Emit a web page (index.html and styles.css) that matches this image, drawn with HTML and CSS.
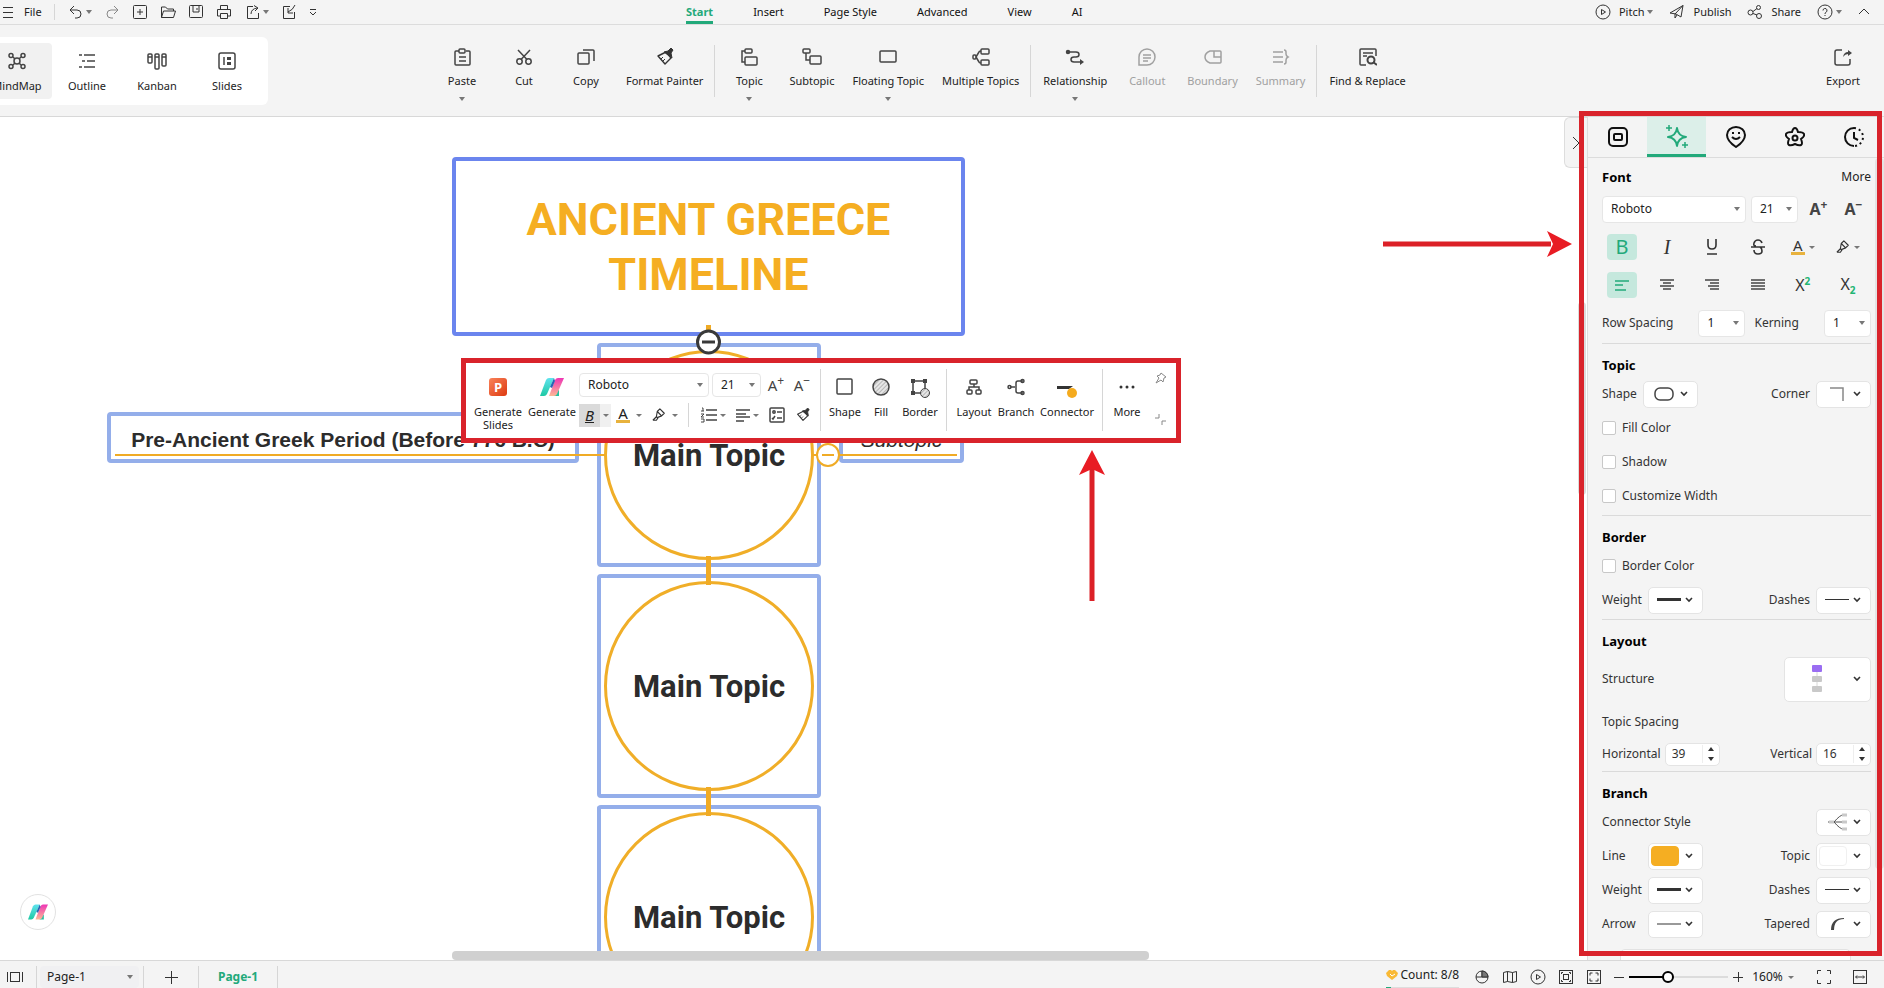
FILE: index.html
```html
<!DOCTYPE html>
<html lang="en">
<head>
    <meta charset="UTF-8">
    <meta name="viewport" content="width=device-width, initial-scale=1.0">
    <title>Ancient Greece Timeline</title>
    <link rel="stylesheet" href="styles.css">
</head>
<body>
    <!-- shared icons -->
    <svg class="defs" width="0" height="0" aria-hidden="true">
        <defs>
            <linearGradient id="teal" x1="0" y1="0" x2="0" y2="1"><stop offset="0" stop-color="#5fe3ee"/><stop offset="1" stop-color="#1fc9a4"/></linearGradient>
            <linearGradient id="pink" x1="0" y1="0" x2="0" y2="1"><stop offset="0" stop-color="#ee35b4"/><stop offset="1" stop-color="#fdb896"/></linearGradient>
            <linearGradient id="orange" x1="0" y1="0" x2="1" y2="1"><stop offset="0" stop-color="#f9825a"/><stop offset="1" stop-color="#dd3a10"/></linearGradient>
            <pattern id="hatch" width="3" height="3" patternUnits="userSpaceOnUse" patternTransform="rotate(45)"><rect width="3" height="3" fill="#e6e6e6"/><path d="M0 0V3" stroke="#aaa" stroke-width="1.6"/></pattern>
        </defs>
        <symbol id="logo" viewBox="0 0 24 18">
            <path d="M14 14l5-2 0 6h-5z" fill="#25bf9f"/>
            <path d="M6 2q1-2 3-2h5L7 16q-1 2-3 2H0z" fill="url(#teal)"/>
            <path d="M15 2q1-2 3-2h6L17 16q-1 2-3 2H9z" fill="url(#pink)"/>
            <path d="M14 0l1 3-3 7-2-1z" fill="#2764b4"/>
        </symbol>
        <symbol id="painter" viewBox="0 0 18 18">
            <path d="M2 8l8-4 5 6-6 6z" fill="none" stroke="currentColor" stroke-width="1.4" stroke-linejoin="round"/>
            <path d="M8 4l4-1 3-3 2 2-2 3 1 5z" fill="currentColor" stroke="currentColor" stroke-linejoin="round"/>
            <path d="M5 11l2-2M7 13l2-2" stroke="currentColor"/>
        </symbol>
        <symbol id="pen" viewBox="0 0 16 16">
            <path d="M1 14l4-4M5 10l1-6 3-3 5 5-3 3-5 2zM6 4l5 5M1 14h4l2-3" fill="none" stroke="currentColor" stroke-width="1.300" stroke-linejoin="round"/>
        </symbol>
        <symbol id="chevron" viewBox="0 0 8 6">
            <path d="M1 1l3 3 3-3" fill="none" stroke="#333" stroke-width="1.6"/>
        </symbol>
    </svg>

    <header class="topbar">
        <button class="file"><svg class="ico" width="10" height="12"><path d="M0 1.5h10M0 6.5h10M0 11.5h10"/></svg>File</button>
        <span class="line"></span>
        <div class="quick">
            <button class="split" aria-label="Undo"><svg class="ico" width="16" height="16"><path d="M6 2L2 6l4 4M2 6h7a4 4 0 0 1 0 8H7"/></svg><i class="caret"></i></button>
            <button aria-label="Redo"><svg class="ico light" width="16" height="16"><path d="M10 2l4 4-4 4M14 6H7a4 4 0 0 0 0 8h2"/></svg></button>
            <button aria-label="New"><svg class="ico" width="16" height="16"><rect x="1.5" y="1.5" width="13" height="13" rx="1"/><path d="M8 5v6M5 8h6"/></svg></button>
            <button aria-label="Open"><svg class="ico" width="16" height="16"><path d="M1.500 13.500V3h4l2 2h6v2M1.500 13.500l2-6.500h12l-2 6.500z"/></svg></button>
            <button aria-label="Save"><svg class="ico" width="16" height="16"><rect x="1.500" y="1.500" width="13" height="12" rx="1"/><path d="M5 2v6h6V2M9 4v2"/></svg></button>
            <button aria-label="Print"><svg class="ico" width="16" height="16"><path d="M4.500 5V1.500h7V5M4 12H1.500V5.500h13V12H12M4.500 9.500h7v5h-7z"/></svg></button>
            <button class="split" aria-label="Share file"><svg class="ico" width="16" height="16"><path d="M8 2.500H2.500v12h11V9M6 10q0-5 6-6M9 1.500l4 2.500-3 3"/></svg><i class="caret"></i></button>
            <button aria-label="Import"><svg class="ico" width="16" height="16"><path d="M9 2.500H2.500v12h11V8M14 1q-2 5-7 7M7 4v5h5"/></svg></button>
            <button class="narrow" aria-label="Customize"><svg class="ico" width="8" height="8"><path d="M1 1.500h6M1 4l3 3 3-3"/></svg></button>
        </div>
        <nav class="menu">
            <a href="#" class="active">Start</a>
            <a href="#">Insert</a>
            <a href="#">Page Style</a>
            <a href="#">Advanced</a>
            <a href="#">View</a>
            <a href="#">AI</a>
        </nav>
        <div class="account">
            <button><svg class="ico" width="16" height="16"><circle cx="8" cy="8" r="7"/><path d="M6.500 5.500v5l4-2.500z"/></svg>Pitch<i class="caret"></i></button>
            <button><svg class="ico" width="16" height="16"><path d="M1 9L14 1.500 12 13 7 10zM14 1.500L6 10v4l2-3"/></svg>Publish</button>
            <button><svg class="ico" width="16" height="16"><circle cx="3.500" cy="8.500" r="2.500"/><circle cx="11.500" cy="3.500" r="2"/><circle cx="12" cy="12" r="2.500"/><path d="M6 7.500l4-3M6 9.500l4 1.500"/></svg>Share</button>
            <button aria-label="Help"><svg class="ico" width="16" height="16"><circle cx="8" cy="8" r="7"/><path d="M6 6.500a2 2 0 1 1 3 1.700q-1 .6-1 1.800M8 11v1"/></svg><i class="caret"></i></button>
            <button aria-label="Collapse ribbon"><svg class="ico" width="12" height="8"><path d="M1 6l5-5 5 5"/></svg></button>
        </div>
    </header>

    <div class="ribbon">
        <div class="views">
            <button class="active"><svg class="ico bold" width="18" height="18"><circle cx="9" cy="9" r="3"/><circle cx="3" cy="3.500" r="2"/><circle cx="15" cy="3.500" r="2"/><circle cx="3" cy="14.500" r="2"/><circle cx="15" cy="14.500" r="2"/><path d="M5 5l2 2M13 5l-2 2M5 13l2-2M13 13l-2-2"/></svg>MindMap</button>
            <button><svg class="ico bold" width="18" height="18"><path d="M1 3h3M6 3h11M4 9h3M9 9h8M1 15h3M6 15h11"/></svg>Outline</button>
            <button><svg class="ico bold" width="20" height="18"><rect x="1" y="2" width="4" height="9" rx="1"/><rect x="8" y="2" width="4" height="15" rx="1"/><rect x="15" y="2" width="4" height="12" rx="1"/><path d="M1 5h4M8 5h4M15 5h4"/></svg>Kanban</button>
            <button><svg class="ico bold" width="18" height="18"><rect x="1" y="1" width="16" height="16" rx="2"/><path d="M6 5v8"/><path d="M9 5h4v3H9zM9 10h4v3H9z" fill="currentColor" stroke="none"/></svg>Slides</button>
        </div>
        <div class="tools">
            <button><svg class="ico bold" width="18" height="18"><path d="M6 3H3q-1 0-1 1v12q0 1 1 1h13q1 0 1-1V4q0-1-1-1h-3"/><rect x="6" y="1" width="6" height="4" rx="1"/><path d="M6 9h7M6 13h7"/></svg>Paste<i class="caret"></i></button>
            <button><svg class="ico bold" width="18" height="18"><circle cx="4.500" cy="13.500" r="2.700"/><circle cx="13.500" cy="13.500" r="2.700"/><path d="M3 2l9 9.500M15 2l-9 9.500"/></svg>Cut</button>
            <button><svg class="ico bold" width="18" height="18"><rect x="1" y="5" width="11" height="11" rx="1"/><path d="M6 2h10q1 0 1 1v10"/></svg>Copy</button>
            <button><svg class="ico" width="18" height="18"><use href="#painter"/></svg>Format Painter</button>
            <span class="line"></span>
            <button><svg class="ico bold" width="18" height="18"><rect x="5" y="1" width="7" height="4" rx="1"/><rect x="5" y="9" width="12" height="8" rx="1"/><path d="M5 3H2v11h3"/></svg>Topic<i class="caret"></i></button>
            <button><svg class="ico bold" width="20" height="18"><rect x="1" y="1" width="7" height="4" rx="1"/><rect x="8" y="8" width="11" height="8" rx="1"/><path d="M4 5v7h4"/></svg>Subtopic</button>
            <button><svg class="ico bold" width="18" height="18"><rect x="1" y="3" width="16" height="11" rx="1"/></svg>Floating Topic<i class="caret"></i></button>
            <button><svg class="ico bold" width="18" height="18"><rect x="9" y="1" width="8" height="5" rx="1"/><rect x="9" y="12" width="8" height="5" rx="1"/><rect x="1" y="7" width="3" height="4" rx="1"/><path d="M4 9l3-5q0-1 2-1M4 9l3 5q0 1 2 1"/></svg>Multiple Topics</button>
            <span class="line"></span>
            <button><svg class="ico bold" width="20" height="18"><path d="M3 4h8q3 0 3 2.500T11 9H9q-3 0-3 2.500T9 14h8"/><circle cx="3" cy="4" r="1.500" fill="currentColor"/><path d="M15 11l4 3-4 3z" fill="currentColor" stroke="none"/></svg>Relationship<i class="caret"></i></button>
            <button disabled><svg class="ico bold" width="18" height="18"><path d="M1 17V9a8 8 0 1 1 8 8zM5 7h8M5 10h8M5 13h5"/></svg>Callout</button>
            <button disabled><svg class="ico bold" width="18" height="18"><path d="M6 3h10q1 0 1 1v10q0 1-1 1H6q-5-2-5-6t5-6zM10 3v6h7"/></svg>Boundary</button>
            <button disabled><svg class="ico bold" width="18" height="18"><path d="M1 4h10M1 9h10M1 14h10M12 2q2 0 2 2v2q0 2 2 3-2 1-2 3v2q0 2-2 2"/></svg>Summary</button>
            <span class="line"></span>
            <button><svg class="ico bold" width="18" height="18"><path d="M7 17H2q-1 0-1-1V2q0-1 1-1h14q1 0 1 1v6M4 5h10M4 8h4"/><circle cx="12" cy="12" r="3.500" stroke-width="2"/><path d="M14 14l4 3" stroke-width="2"/></svg>Find &amp; Replace</button>
        </div>
        <div class="tools export">
            <button><svg class="ico bold" width="18" height="18"><path d="M8 2H3Q1 2 1 4v11q0 2 2 2h11q2 0 2-2v-4"/><path d="M9 9q1-5 5-5V2l4 3-4 3V6q-3 0-5 3z" fill="currentColor" stroke="none"/></svg>Export</button>
        </div>
    </div>

    <main class="workspace">
        <section class="canvas">
            <div class="node root"><h1>ANCIENT GREECE TIMELINE</h1></div>

            <div class="node main n1"><div class="circle">Main Topic</div></div>
            <div class="node main n2"><div class="circle">Main Topic</div></div>
            <div class="node main n3"><div class="circle">Main Topic</div></div>

            <div class="node leaf left">Pre-Ancient Greek Period (Before 776 B.C)</div>
            <div class="node leaf right">Subtopic</div>

            <svg class="links" width="1100" height="843">
                <path d="M115 338H605M812 338h145" stroke="#f0ab25" stroke-width="2"/>
                <path d="M708.500 208v15M708.500 439v29M708.500 670v29" stroke="#f0ab25" stroke-width="5"/>
                <circle cx="708.500" cy="225" r="11" fill="#fff" stroke="#3a3a3a" stroke-width="3"/>
                <path d="M702 225h13" stroke="#3a3a3a" stroke-width="3"/>
                <circle cx="828" cy="338" r="11" fill="#fff" stroke="#f0ab25" stroke-width="2"/>
                <path d="M822 338h12" stroke="#f0ab25" stroke-width="2"/>
            </svg>

            <div class="floatbar">
                <button class="tool wide"><svg width="18" height="18"><rect width="18" height="18" rx="3" fill="url(#orange)"/><text x="9" y="14" text-anchor="middle" class="ppt">P</text></svg>Generate Slides</button>
                <button class="tool gen"><svg width="24" height="18"><use href="#logo"/></svg>Generate</button>
                <div class="format">
                    <div class="format-row">
                        <label class="select font"><select aria-label="Font"><option>Roboto</option></select></label>
                        <label class="select size"><select aria-label="Font size"><option>21</option></select></label>
                        <button class="grow">A<sup>+</sup></button>
                        <button class="grow">A<sup>−</sup></button>
                    </div>
                    <div class="format-row">
                        <button class="bold-btn"><span class="b">B</span><span class="drop"><i class="caret small"></i></span></button>
                        <button class="mini"><span class="letter">A</span><i class="caret small"></i></button>
                        <button class="mini" aria-label="Highlight"><svg class="ico" width="14" height="14"><use href="#pen"/></svg><i class="caret small"></i></button>
                        <span class="line"></span>
                        <button class="mini tight" aria-label="Numbering"><svg class="ico bold" width="16" height="16"><path d="M5 3h11M5 8h11M5 13h11"/><path d="M1 1h1v3M0 4h3M0 7h3l-3 3h3M0 12h3v3H0" stroke-width="1"/></svg><i class="caret small"></i></button>
                        <button class="mini tight" aria-label="Align"><svg class="ico bold" width="14" height="14"><path d="M0 2h14M0 6h10M0 9h14M0 13h8"/></svg><i class="caret small"></i></button>
                        <button class="grow" aria-label="Task list"><svg class="ico bold" width="16" height="16"><rect x="1" y="1" width="14" height="14" rx="1"/><circle cx="5" cy="5" r="1.200"/><path d="M8 5h5M8 11h5M3 11l1 1 2-3"/></svg></button>
                        <button class="grow" aria-label="Format painter"><svg class="ico" width="14" height="14"><use href="#painter"/></svg></button>
                    </div>
                </div>
                <span class="line"></span>
                <button class="tool w36"><svg class="ico bold" width="18" height="18"><rect x="1" y="1" width="15" height="15" rx="1"/></svg>Shape</button>
                <button class="tool w36"><svg class="ico bold" width="18" height="18"><circle cx="9" cy="9" r="8" fill="url(#hatch)"/></svg>Fill</button>
                <button class="tool w42"><svg class="ico bold" width="20" height="20"><rect x="3" y="3" width="12" height="12"/><path d="M1 1h4v4H1zM13 1h4v4h-4zM1 13h4v4H1z" fill="currentColor" stroke="none"/><circle cx="15" cy="15" r="4.500" fill="url(#hatch)" stroke-width="1"/></svg>Border</button>
                <span class="line"></span>
                <button class="tool w42"><svg class="ico bold" width="18" height="18"><rect x="5" y="2" width="7" height="4" rx="1"/><rect x="2" y="12" width="5" height="4" rx="1"/><rect x="11" y="12" width="5" height="4" rx="1"/><path d="M9 6v3M4 12V9h10v3"/></svg>Layout</button>
                <button class="tool w42"><svg class="ico bold" width="18" height="18"><path d="M3 9h5M16 3h-5q-2 0-2 2v8q0 2 2 2h5"/><circle cx="2.500" cy="9" r="1.500"/><circle cx="15.500" cy="3" r="1.500"/><circle cx="15.500" cy="15" r="1.500"/></svg>Branch</button>
                <button class="tool w60"><svg width="20" height="20"><path d="M0 8h16l-4 3H0z" fill="#333"/><circle cx="15" cy="15" r="5" fill="#f5ab1e"/></svg>Connector</button>
                <span class="line"></span>
                <button class="tool w36"><svg width="18" height="18" fill="#333"><circle cx="3" cy="9" r="1.500"/><circle cx="9" cy="9" r="1.500"/><circle cx="15" cy="9" r="1.500"/></svg>More</button>
                <div class="pins">
                    <button aria-label="Pin"><svg class="ico" width="12" height="12"><path d="M6 1l5 4-2 1-1 4-2-2-5 3 3-5-2-2 3-1z"/></svg></button>
                    <button aria-label="Minimize"><svg class="ico" width="12" height="12"><path d="M0 4h4V0M7 11V7h4"/></svg></button>
                </div>
            </div>

            <svg class="arrow-right" width="192" height="28"><path d="M2 14h168" stroke="#dc2027" stroke-width="5"/><path d="M166 1l25 13-25 13 6-13z" fill="#e81c24"/></svg>
            <svg class="arrow-up" width="28" height="153"><path d="M14 152V20" stroke="#dc2027" stroke-width="5"/><path d="M1 26L14 1l13 25-13-6z" fill="#e81c24"/></svg>

            <button class="assistant" aria-label="AI assistant"><svg width="20" height="16"><use href="#logo"/></svg></button>
            <div class="hscroll"></div>
            <div class="vscroll"></div>
            <button class="collapse" aria-label="Hide panel"><svg class="ico" width="8" height="14"><path d="M1 1l6 6-6 6"/></svg></button>
        </section>

        <aside class="panel">
            <div class="tabs">
                <button aria-label="Topic"><svg class="ico heavy" width="20" height="20"><rect x="1" y="1" width="18" height="18" rx="4"/><rect x="6" y="7" width="8" height="6" rx="1"/></svg></button>
                <button class="active" aria-label="Style"><svg class="ico heavy" width="24" height="24"><path d="M12 3q1 8 9 9-8 1-9 9-1-8-9-9 8-1 9-9z" stroke-linejoin="round"/><path d="M4 0v6M1 3h6M20 17v6M17 20h6" stroke-width="1.500"/></svg></button>
                <button aria-label="Sticker"><svg class="ico heavy" width="20" height="22"><path d="M10 21q-9-6-9-12a9 8 0 0 1 18 0q0 6-9 12zM6 11q4 4 8 0M7 6v2M13 6v2"/></svg></button>
                <button aria-label="Theme"><svg class="ico heavy" width="20" height="20"><path d="M10 1q2 0 3 4 5 0 6 2t-3 5q2 5 0 6t-6-1q-4 2-6 1t0-6q-4-3-3-5t6-2q1-4 3-4z"/><circle cx="10" cy="11" r="2.500"/></svg></button>
                <button aria-label="History"><svg class="ico heavy" width="20" height="20"><path d="M10 1a9 9 0 0 0 0 18M10 5v6l4 2"/><path d="M10 1a9 9 0 0 1 0 18" stroke-dasharray="2 3"/></svg></button>
            </div>
            <div class="panel-body">
                <section class="group fonts">
                    <div class="title"><h2>Font</h2><a href="#">More</a></div>
                    <div class="row tall picks">
                        <label class="select font"><select aria-label="Font family"><option>Roboto</option></select></label>
                        <label class="select size"><select aria-label="Size"><option>21</option></select></label>
                        <button class="step">A<sup>+</sup></button>
                        <button class="step">A<sup>−</sup></button>
                    </div>
                    <div class="row tall marks">
                        <button class="active big">B</button>
                        <button class="italic">I</button>
                        <button aria-label="Underline"><svg class="ico heavy" width="14" height="16"><path d="M3 0v6q0 4 4 4t4-4V0M2 15h10" stroke-width="1.600"/></svg></button>
                        <button aria-label="Strikethrough"><svg class="ico heavy" width="14" height="16"><path d="M11 4q-1-3-4-3T3 4t2 3M0 8h14M3 11q0 4 4 4t4-3-2-4" stroke-width="1.600"/></svg></button>
                        <button><span class="letter">A</span><i class="caret small"></i></button>
                        <button aria-label="Highlight"><svg class="ico" width="14" height="14"><use href="#pen"/></svg><i class="caret small"></i></button>
                    </div>
                    <div class="row tall marks">
                        <button class="active" aria-label="Align left"><svg class="ico bold" width="14" height="12"><path d="M0 2h14M0 6h8M0 11h11"/></svg></button>
                        <button aria-label="Align center"><svg class="ico bold" width="14" height="12"><path d="M0 1h14M3 4h8M0 7h14M3 10h8"/></svg></button>
                        <button aria-label="Align right"><svg class="ico bold" width="14" height="12"><path d="M0 1h14M5 4h9M3 7h11M5 10h9"/></svg></button>
                        <button aria-label="Justify"><svg class="ico bold" width="14" height="12"><path d="M0 1h14M0 4h14M0 7h14M0 10h14"/></svg></button>
                        <button class="script"><span>X<sup>2</sup></span></button>
                        <button class="script"><span>X<sub>2</sub></span></button>
                    </div>
                    <div class="row tall">
                        <label for="rowsp">Row Spacing</label>
                        <span class="select size push"><select id="rowsp"><option>1</option></select></span>
                        <label class="kern" for="kern">Kerning</label>
                        <span class="select size push"><select id="kern"><option>1</option></select></span>
                    </div>
                </section>

                <section class="group">
                    <div class="title"><h2>Topic</h2></div>
                    <div class="row">
                        <span>Shape</span>
                        <button class="pick" aria-label="Shape"><svg class="ico bold" width="24" height="16"><rect x="3" y="2" width="18" height="12" rx="5"/></svg><svg width="8" height="6"><use href="#chevron"/></svg></button>
                        <span class="push">Corner</span>
                        <button class="pick" aria-label="Corner"><svg class="ico bold light" width="24" height="16"><path d="M5 2h13v13"/></svg><svg width="8" height="6"><use href="#chevron"/></svg></button>
                    </div>
                    <label class="row check"><input type="checkbox">Fill Color</label>
                    <label class="row check"><input type="checkbox">Shadow</label>
                    <label class="row check"><input type="checkbox">Customize Width</label>
                </section>

                <section class="group">
                    <div class="title"><h2>Border</h2></div>
                    <label class="row check"><input type="checkbox">Border Color</label>
                    <div class="row">
                        <span class="fixed">Weight</span>
                        <button class="pick" aria-label="Border weight"><svg width="24" height="16"><path d="M0 7.500h24" stroke="#333" stroke-width="3"/></svg><svg width="8" height="6"><use href="#chevron"/></svg></button>
                        <span class="push">Dashes</span>
                        <button class="pick" aria-label="Border dashes"><svg width="24" height="16"><path d="M0 7.500h24" stroke="#333"/></svg><svg width="8" height="6"><use href="#chevron"/></svg></button>
                    </div>
                </section>

                <section class="group">
                    <div class="title"><h2>Layout</h2></div>
                    <div class="row structure">
                        <span>Structure</span>
                        <button class="pick large push" aria-label="Structure"><svg width="10" height="28"><path d="M5 4v20" stroke="#d8d8d8"/><rect y="0" width="10" height="7" rx="1" fill="#9a6df2"/><rect y="11" width="10" height="6" rx="1" fill="#c9c9c9"/><rect y="21" width="10" height="6" rx="1" fill="#c9c9c9"/></svg><svg width="8" height="6"><use href="#chevron"/></svg></button>
                    </div>
                    <div class="row"><span>Topic Spacing</span></div>
                    <div class="row short">
                        <label for="hor">Horizontal</label>
                        <span class="spin"><input id="hor" type="text" value="39"><span class="spin-btns"><i class="up"></i><i class="caret dark"></i></span></span>
                        <label class="push" for="ver">Vertical</label>
                        <span class="spin"><input id="ver" type="text" value="16"><span class="spin-btns"><i class="up"></i><i class="caret dark"></i></span></span>
                    </div>
                </section>

                <section class="group last">
                    <div class="title"><h2>Branch</h2></div>
                    <div class="row">
                        <span>Connector Style</span>
                        <button class="pick push" aria-label="Connector style"><svg class="ico" width="24" height="18"><path d="M3 9h6M9 9q6-7 9-7M9 9h9M9 9q6 7 9 7" stroke="#555"/><path d="M4 9h5M17 2h5M17 9h5M17 16h5" stroke="#c9c9c9" stroke-width="3"/></svg><svg width="8" height="6"><use href="#chevron"/></svg></button>
                    </div>
                    <div class="row">
                        <span class="fixed">Line</span>
                        <button class="pick color" aria-label="Line color"><span class="swatch amber"></span><svg width="8" height="6"><use href="#chevron"/></svg></button>
                        <span class="push">Topic</span>
                        <button class="pick color" aria-label="Topic color"><span class="swatch"></span><svg width="8" height="6"><use href="#chevron"/></svg></button>
                    </div>
                    <div class="row">
                        <span class="fixed">Weight</span>
                        <button class="pick" aria-label="Line weight"><svg width="24" height="16"><path d="M0 7.500h24" stroke="#333" stroke-width="3"/></svg><svg width="8" height="6"><use href="#chevron"/></svg></button>
                        <span class="push">Dashes</span>
                        <button class="pick" aria-label="Line dashes"><svg width="24" height="16"><path d="M0 7.500h24" stroke="#333"/></svg><svg width="8" height="6"><use href="#chevron"/></svg></button>
                    </div>
                    <div class="row">
                        <span class="fixed">Arrow</span>
                        <button class="pick" aria-label="Arrow"><svg width="24" height="16"><path d="M0 8h24" stroke="#999" stroke-width="2"/></svg><svg width="8" height="6"><use href="#chevron"/></svg></button>
                        <span class="push">Tapered</span>
                        <button class="pick" aria-label="Tapered"><svg width="24" height="16"><path d="M6 14q0-12 13-12v1Q9 3 9 14z" fill="#444"/></svg><svg width="8" height="6"><use href="#chevron"/></svg></button>
                    </div>
                </section>
                <div class="card"></div>
            </div>
            <div class="panel-scroll"></div>
            <div class="highlight"></div>
        </aside>
    </main>

    <footer class="statusbar">
        <button class="viewmode" aria-label="Page view"><svg class="ico" width="16" height="12"><rect x="3.500" y="1.500" width="9" height="9"/><path d="M.5 1v10M15.500 1v10"/></svg></button>
        <span class="line"></span>
        <label class="select page"><select aria-label="Page"><option>Page-1</option></select></label>
        <span class="line"></span>
        <button class="add" aria-label="Add page"><svg class="ico" width="14" height="14"><path d="M7.500 1v13M1 7.500h13"/></svg></button>
        <span class="line"></span>
        <a href="#" class="pagetab">Page-1</a>
        <span class="line"></span>
        <div class="count"><svg width="12" height="12"><path d="M3 1h2l1 1 1-1h2l3 3-1 3-5 4-5-4-1-3z" fill="#f9b935"/><path d="M4 5l2 2 3-2" fill="none" stroke="#fff"/></svg>Count: 8/8<span class="bar"><span class="bar-fill"></span></span></div>
        <button aria-label="Mouse mode"><svg class="ico" width="14" height="16"><rect x="1" y="2" width="12" height="12" rx="6"/><path d="M7 2v6M1 8h12"/><path d="M7 2a6 6 0 0 1 6 6H7z" fill="#777"/></svg></button>
        <button aria-label="Overview"><svg class="ico" width="16" height="16"><path d="M1.500 3.500l4-1 5 1 4-1v10l-4 1-5-1-4 1zM5.500 2.500v10M10.500 3.500v10"/></svg></button>
        <button aria-label="Present"><svg class="ico" width="16" height="16"><circle cx="8" cy="8" r="7"/><path d="M6.500 5.500v5l4-2.500z"/></svg></button>
        <button aria-label="Fit page"><svg class="ico" width="16" height="16"><rect x="1.500" y="1.500" width="13" height="13"/><rect x="5.500" y="5.500" width="5" height="5"/><path d="M3.500 5V3.500H5M11 3.500h1.500V5M3.500 11v1.500H5M11 12.500h1.500V11"/></svg></button>
        <button aria-label="Center"><svg class="ico" width="16" height="16"><rect x="1.500" y="1.500" width="13" height="13"/><path d="M4 6.500V4h2.500M9.500 4H12v2.500M4 9.500V12h2.500M9.500 12H12V9.500"/></svg></button>
        <div class="zoom">
            <button aria-label="Zoom out"><svg class="ico" width="10" height="10"><path d="M0 5.500h10"/></svg></button>
            <input type="range" min="0" max="100" value="38" aria-label="Zoom">
            <button aria-label="Zoom in"><svg class="ico" width="10" height="10"><path d="M0 5.500h10M5.500 0v10"/></svg></button>
            <button class="percent">160%<i class="caret small"></i></button>
        </div>
        <button class="wide" aria-label="Full screen"><svg class="ico" width="16" height="16"><path d="M1.500 5V1.500H5M11 1.500h3.500V5M1.500 11v3.500H5M11 14.500h3.500V11"/></svg></button>
        <button class="wide" aria-label="Fit width"><svg class="ico" width="16" height="16"><rect x="1.500" y="1.500" width="13" height="13"/><path d="M4 8h8M5 6.500L3.500 8 5 9.500M11 6.500L12.500 8 11 9.500"/></svg></button>
    </footer>
</body>
</html>
```

FILE: styles.css
```css
* {
    box-sizing: border-box;
}
body {
    margin: 0;
    height: 100vh;
    display: flex;
    flex-direction: column;
    overflow: hidden;
    font-family: "Noto Sans", "Open Sans", sans-serif;
    font-size: 11px;
    line-height: 14px;
    color: #222;
    background: #f4f4f4;
}
.defs {
    position: absolute;
}
svg {
    display: block;
    flex: none;
}
button {
    font: inherit;
    color: inherit;
    background: none;
    border: 0;
    padding: 0;
    display: flex;
    align-items: center;
    justify-content: center;
    white-space: nowrap;
}
a {
    color: inherit;
    text-decoration: none;
}
.ico {
    fill: none;
    stroke: currentColor;
    stroke-width: 1;
    color: #333;
}
.ico.bold {
    stroke-width: 1.5;
    color: #444;
}
.ico.heavy {
    stroke-width: 2;
    color: inherit;
}
.ico.light {
    color: #888;
}
.line {
    width: 1px;
    background: #d6d6d6;
    flex: none;
}
.caret {
    border: 3px solid transparent;
    border-top: 4px solid #777;
    border-bottom: 0;
    flex: none;
}
.caret.small {
    border-top-width: 3px;
}
.caret.dark {
    border-top-color: #333;
}

/* top bar */
.topbar {
    height: 25px;
    flex: none;
    display: flex;
    align-items: center;
    border-bottom: 1px solid #dcdcdc;
}
.file {
    gap: 11px;
    padding-left: 3px;
    width: 54px;
    justify-content: flex-start;
}
.topbar .line {
    height: 16px;
    margin-right: 6px;
}
.quick {
    display: flex;
}
.quick button {
    width: 28px;
    height: 22px;
}
.quick .split {
    width: 37px;
    gap: 2px;
}
.quick .narrow {
    width: 20px;
}
.menu {
    display: flex;
    gap: 40px;
    margin-left: 363px;
    color: #111;
}
.menu a {
    line-height: 23px;
    height: 24px;
    border-bottom: 3px solid transparent;
}
.menu .active {
    color: #22a97a;
    font-weight: bold;
    border-color: #22a97a;
}
.account {
    display: flex;
    margin-left: auto;
    padding-right: 14px;
    gap: 16px;
}
.account button {
    gap: 8px;
}
.account .caret {
    margin-left: -5px;
}

/* ribbon */
.ribbon {
    height: 92px;
    flex: none;
    display: flex;
    align-items: flex-start;
    border-bottom: 1px solid #d8d8d8;
    overflow: hidden;
}
.views {
    display: flex;
    flex: none;
    margin: 12px 163px 0 -24px;
    padding: 6px;
    height: 68px;
    border-radius: 6px;
    background: #fff;
}
.views button {
    flex-direction: column;
    width: 70px;
    height: 56px;
    gap: 9px;
    padding-top: 2px;
    border-radius: 4px;
}
.views .active {
    background: #f1f1f1;
}
.tools {
    display: flex;
    padding-top: 23px;
}
.tools button {
    flex-direction: column;
    justify-content: flex-start;
    gap: 8px;
    min-width: 62px;
    padding: 0 9px;
}
.tools .caret {
    margin-top: 1px;
}
.tools .line {
    height: 52px;
    margin: -3px 3px 0 2px;
}
.tools button:disabled,
.tools button:disabled .ico {
    color: #a0a0a0;
}
.export {
    margin-left: auto;
    padding-right: 10px;
}

/* workspace */
.workspace {
    flex: 1;
    min-height: 0;
    display: flex;
}
.canvas {
    position: relative;
    flex: 1;
    min-width: 0;
    background: #fff;
}
.node {
    position: absolute;
    border: 4px solid #94aeea;
    border-radius: 4px;
}
.root {
    left: 452px;
    top: 40px;
    width: 513px;
    height: 179px;
    border-color: #6b85ee;
    display: flex;
    align-items: center;
}
.root h1 {
    margin: 0 auto;
    width: 400px;
    text-align: center;
    font: bold 45px/55px Roboto, sans-serif;
    color: #f5ae22;
}
.main {
    left: 597px;
    width: 224px;
    height: 224px;
    padding: 3px;
    font: bold 31px/36px Roboto, sans-serif;
    color: #2c2c2c;
}
.n1 {
    top: 226px;
}
.n2 {
    top: 457px;
}
.n3 {
    top: 688px;
    height: 155px;
    overflow: hidden;
    border-bottom: 0;
}
.circle {
    height: 210px;
    padding-top: 2px;
    border: 3px solid #f0ae28;
    border-radius: 50%;
    display: flex;
    align-items: center;
    justify-content: center;
}
.leaf {
    top: 295px;
    height: 51px;
    padding-top: 12px;
    text-align: center;
    color: #2c2c2c;
}
.left {
    left: 107px;
    width: 472px;
    font: bold 21px/24px "Liberation Sans", Arial, sans-serif;
}
.right {
    left: 839px;
    width: 125px;
    font: italic 21px/24px "Liberation Sans", Arial, sans-serif;
}
.links {
    position: absolute;
    left: 0;
    top: 0;
}
.arrow-right {
    position: absolute;
    left: 1381px;
    top: 113px;
}
.arrow-up {
    position: absolute;
    left: 1078px;
    top: 332px;
}
.assistant {
    position: absolute;
    left: 20px;
    bottom: 30px;
    width: 36px;
    height: 36px;
    border: 1px solid #e2e2e2;
    border-radius: 50%;
}
.hscroll {
    position: absolute;
    left: 452px;
    bottom: 0;
    width: 697px;
    height: 9px;
    border-radius: 4px;
    background: #d0d0d0;
}
.vscroll {
    position: absolute;
    right: 1px;
    top: 185px;
    width: 8px;
    height: 193px;
    border-radius: 4px;
    background: #dcdcdc;
}
.collapse {
    position: absolute;
    right: 0;
    top: 0;
    width: 23px;
    height: 51px;
    border: 1px solid #ddd;
    border-right: 0;
    border-radius: 6px 0 0 6px;
    background: #f4f4f4;
}

/* floating toolbar */
.floatbar {
    position: absolute;
    left: 461px;
    top: 241px;
    width: 720px;
    height: 85px;
    padding: 6px 0 0 5px;
    border: 5px solid #d9232b;
    background: #fff;
    display: flex;
}
.floatbar > .line {
    height: 62px;
}
.tool {
    flex-direction: column;
    justify-content: flex-start;
    gap: 9px;
    padding-top: 9px;
    line-height: 13px;
    height: 66px;
}
.tool svg {
    margin: 0 auto;
    height: 18px;
    overflow: visible;
}
.wide {
    width: 54px;
    white-space: normal;
}
.gen {
    width: 54px;
}
.w36 {
    width: 36px;
}
.w42 {
    width: 42px;
}
.w60 {
    width: 60px;
}
.floatbar > .line + .tool {
    margin-left: 6px;
}
.floatbar > .tool + .line {
    margin-left: 5px;
}
.ppt {
    font: bold 13px "Open Sans", sans-serif;
    fill: #fff;
}
.format {
    width: 241px;
    padding-top: 4px;
    display: flex;
    flex-direction: column;
    gap: 6px;
}
.format-row {
    height: 24px;
    display: flex;
    align-items: center;
}
.select {
    position: relative;
    display: block;
    height: 27px;
    border: 1px solid #e6e6e6;
    border-radius: 4px;
    background: #fff;
}
.select::after {
    content: "";
    position: absolute;
    right: 5px;
    top: 50%;
    margin-top: -2px;
    border: 3px solid transparent;
    border-top: 4px solid #777;
    border-bottom: 0;
}
.select select {
    appearance: none;
    width: 100%;
    height: 100%;
    border: 0;
    padding: 0 8px;
    font: inherit;
    font-size: 12px;
    color: #222;
    background: none;
}
.format .select {
    height: 24px;
}
.format .font {
    width: 130px;
    margin-right: 3px;
}
.format .size {
    width: 49px;
    margin-right: 2px;
}
.grow {
    width: 26px;
    font-size: 15px;
    color: #444;
}
.grow sup,
.step sup {
    font-size: 12px;
    line-height: 8px;
    margin-top: -8px;
    vertical-align: baseline;
}
.bold-btn .b {
    width: 21px;
    height: 23px;
    background: #dadada;
    font-size: 15px;
    line-height: 22px;
    font-style: italic;
    text-decoration: underline;
}
.bold-btn .drop {
    width: 11px;
    height: 23px;
    background: #f0f0f0;
    display: flex;
    align-items: center;
    justify-content: center;
}
.mini {
    width: 36px;
    gap: 6px;
}
.mini.tight {
    width: 34px;
    gap: 3px;
}
.letter {
    width: 14px;
    font-size: 15px;
    line-height: 13px;
    border-bottom: 3px solid #e8b23d;
}
.format-row .line {
    height: 24px;
    margin: 0 7px 0 5px;
}
.pins {
    display: flex;
    flex-direction: column;
    gap: 30px;
    padding: 3px 0 0 10px;
}
.pins .ico {
    color: #888;
}

/* right panel */
.panel {
    position: relative;
    width: 297px;
    flex: none;
    display: flex;
    flex-direction: column;
    border-left: 1px solid #ddd;
    background: #f4f4f4;
    font-size: 12px;
    line-height: 16px;
}
.tabs {
    flex: none;
    display: flex;
    height: 41px;
    border-bottom: 1px solid #dcdcdc;
    color: #111;
}
.tabs button {
    flex: 1;
    padding-top: 2px;
    border-bottom: 3px solid transparent;
}
.tabs .active {
    color: #22a97a;
    background: #dcefe9;
    border-color: #22a97a;
}
.panel-body {
    flex: 1;
    min-height: 0;
    overflow: hidden;
    padding: 0 13px 0 14px;
}
.group {
    padding: 10px 0 2px;
    border-bottom: 1px solid #dadada;
}
.fonts {
    padding: 8px 0 1px;
}
.last {
    padding-bottom: 8px;
    border-bottom: 0;
}
.title {
    height: 22px;
    margin-bottom: 1px;
    display: flex;
    align-items: center;
    justify-content: space-between;
}
.fonts .title {
    margin-bottom: 2px;
}
h2 {
    margin: 0;
    font-size: 13px;
    color: #000;
}
.row {
    height: 34px;
    display: flex;
    align-items: center;
    color: #333;
}
.row.tall {
    height: 38px;
}
.row.short {
    height: 30px;
}
.row.structure {
    height: 52px;
}
.push {
    margin-left: auto;
}
.fixed {
    width: 40px;
}
.picks .font {
    width: 144px;
    margin-right: 5px;
}
.panel .size {
    width: 47px;
}
.picks .size {
    margin-right: 3px;
}
.step {
    flex: 1;
    font-size: 16px;
    font-weight: bold;
    color: #444;
}
.kern {
    margin-left: 9px;
}
.marks {
    justify-content: space-between;
    padding: 0 8px 0 5px;
}
.marks button {
    width: 30px;
    height: 26px;
    gap: 4px;
    border-radius: 4px;
}
.marks .active,
.marks .active .ico {
    color: #22a97a;
    background: #c5e8dd;
}
.marks .big {
    font-size: 20px;
}
.marks .italic {
    font: italic 20px "Liberation Serif", serif;
}
.script {
    font-size: 16px;
}
.script sup,
.script sub {
    font-size: 10px;
    font-weight: bold;
    line-height: 8px;
    color: #22b573;
}
.pick {
    width: 55px;
    height: 27px;
    margin-left: 6px;
    padding: 0 9px 0 8px;
    justify-content: space-between;
    border: 1px solid #e4e4e4;
    border-radius: 5px;
    background: #fff;
}
.pick.push {
    margin-left: auto;
}
.pick.large {
    width: 87px;
    height: 45px;
    padding-left: 27px;
}
.pick.color {
    padding-left: 2px;
}
.swatch {
    width: 28px;
    height: 20px;
    border: 1px solid #f0f0f0;
    border-radius: 4px;
}
.amber {
    background: #f5ae22;
    border-color: #f5ae22;
}
.check {
    gap: 6px;
}
.check input {
    appearance: none;
    width: 14px;
    height: 14px;
    margin: 0;
    border: 1px solid #c8c8c8;
    border-radius: 2px;
    background: #fff;
}
.spin {
    display: flex;
    align-items: center;
    width: 55px;
    height: 23px;
    margin-left: 4px;
    border: 1px solid #e4e4e4;
    border-radius: 5px;
    background: #fff;
}
.spin input {
    flex: 1;
    width: 20px;
    border: 0;
    padding: 0 0 0 6px;
    font: inherit;
    color: #333;
    background: none;
}
.spin-btns {
    width: 17px;
    height: 18px;
    border-left: 1px solid #eee;
    display: flex;
    flex-direction: column;
    align-items: center;
    justify-content: center;
    gap: 6px;
}
.up {
    border: 3px solid transparent;
    border-bottom: 4px solid #333;
    border-top: 0;
}
.card {
    height: 40px;
    margin: 0 20px 0 18px;
    border: 1px solid #e2e2e2;
    border-radius: 5px;
    background: #fff;
}
.panel-scroll {
    position: absolute;
    right: 0;
    top: 41px;
    width: 9px;
    height: 711px;
    border-radius: 4px;
    background: #e3e3e3;
}
.highlight {
    position: absolute;
    inset: -6px 2px 4px -9px;
    border: 5px solid #d9232b;
    pointer-events: none;
}

/* status bar */
.statusbar {
    height: 28px;
    flex: none;
    display: flex;
    align-items: center;
    border-top: 1px solid #d8d8d8;
    padding: 5px 6px 0 0;
}
.statusbar .line {
    height: 22px;
}
.statusbar button {
    width: 28px;
}
.statusbar .viewmode {
    width: 36px;
    padding-right: 6px;
}
.page {
    width: 99px;
    height: 22px;
    margin: 0 4px 0 3px;
    border-color: #f0f0f2;
    background: #f0f0f2;
}
.page select {
    padding: 0 6px;
}
.statusbar .add {
    width: 54px;
}
.pagetab {
    width: 78px;
    text-align: center;
    font-size: 12px;
    font-weight: bold;
    color: #22a97a;
}
.count {
    position: relative;
    display: flex;
    align-items: center;
    gap: 2px;
    margin: -5px 9px 0 auto;
    font-size: 12px;
}
.bar {
    position: absolute;
    left: 0;
    right: 0;
    top: 19px;
    height: 2px;
    background: #ddd;
}
.bar-fill {
    display: block;
    width: 5px;
    height: 2px;
    background: #22a97a;
}
.zoom {
    display: flex;
    align-items: center;
    margin: 0 9px 0 5px;
}
.zoom button {
    width: 12px;
}
.zoom input {
    appearance: none;
    width: 99px;
    height: 2px;
    margin: 0 4px;
    background: linear-gradient(to right, #000 40%, #dcdcdc 40%);
}
.zoom input::-webkit-slider-thumb {
    appearance: none;
    width: 12px;
    height: 12px;
    border: 2px solid #000;
    border-radius: 50%;
    background: #fff;
}
.zoom .percent {
    width: 48px;
    margin-left: 5px;
    gap: 5px;
    font-size: 12px;
}
.statusbar .wide {
    width: 36px;
}
```
